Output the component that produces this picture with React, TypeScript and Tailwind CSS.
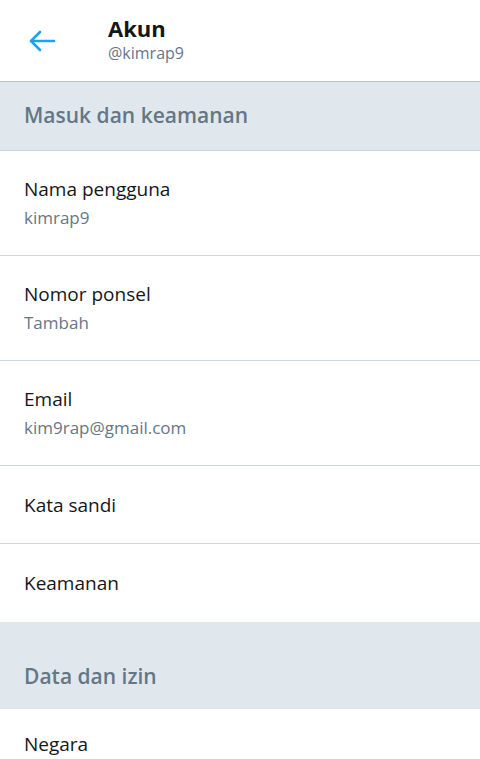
const font = { fontFamily: '"Open Sans", "Noto Sans", sans-serif' };

function Row({ title, sub }: { title: string; sub?: string }) {
  return (
    <div
      className={`flex flex-col justify-center border-b border-[#ccd6dd] px-6 ${
        sub ? "h-[105px]" : "h-[78px]"
      }`}
    >
      <p className="text-[19px] leading-[26px] text-[#14171a]">{title}</p>
      {sub && <p className="mt-1 text-[17px] leading-[24px] text-[#657786]">{sub}</p>}
    </div>
  );
}

function Section({ label, h }: { label: string; h: string }) {
  return (
    <div className={`flex items-center bg-[#e1e8ed] px-6 ${h}`}>
      <h2 className="text-[21px] font-semibold text-[#657786]">{label}</h2>
    </div>
  );
}

export default function App() {
  return (
    <div className="h-[759px] w-[480px] overflow-hidden bg-white" style={font}>
      <header className="flex h-[82px] items-center border-b border-[#bdc3c7] shadow-[0_1px_2px_rgba(0,0,0,0.15)]">
        <button className="ml-[28px] mr-[52px] text-[#1da1f2]">
          <svg width="28" height="24" viewBox="0 0 28 24" fill="none" stroke="currentColor" strokeWidth="2.6" strokeLinecap="round" strokeLinejoin="round">
            <path d="M26 12H3" />
            <path d="M12 3L3 12l9 9" />
          </svg>
        </button>
        <div className="-mt-1">
          <h1 className="text-[22px] font-bold leading-[28px] text-[#14171a]">Akun</h1>
          <p className="text-[16px] leading-[22px] text-[#657786]">@kimrap9</p>
        </div>
      </header>
      <Section label="Masuk dan keamanan" h="h-[69px] border-b border-[#ccd6dd]" />
      <Row title="Nama pengguna" sub="kimrap9" />
      <Row title="Nomor ponsel" sub="Tambah" />
      <Row title="Email" sub="kim9rap@gmail.com" />
      <Row title="Kata sandi" />
      <div className="flex h-[78px] items-center px-6">
        <p className="text-[19px] text-[#14171a]">Keamanan</p>
      </div>
      <Section label="Data dan izin" h="h-[87px] pt-[22px]" />
      <div className="h-[50px] px-6 pt-[23px]">
        <p className="text-[19px] leading-[24px] text-[#14171a]">Negara</p>
      </div>
    </div>
  );
}
